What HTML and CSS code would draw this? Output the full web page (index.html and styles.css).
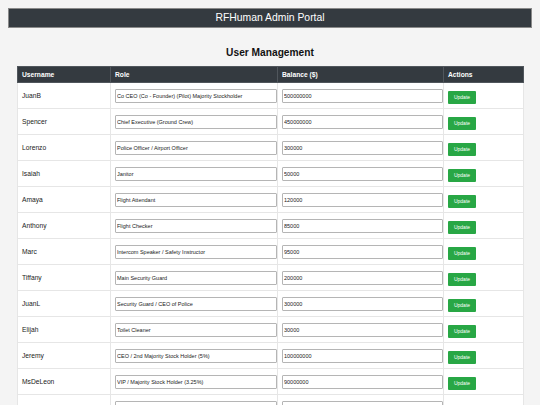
FILE: index.html
```html
<!DOCTYPE html>
<html lang="en">
<head>
    <meta charset="UTF-8">
    <meta name="viewport" content="width=device-width, initial-scale=1.0">
    <title>RFHuman Admin Portal</title>
    <link rel="stylesheet" href="styles.css">
</head>
<body>
    <header class="topbar">RFHuman Admin Portal</header>

    <h2 class="title">User Management</h2>

    <table class="users">
        <thead>
            <tr>
                <th class="col-user">Username</th>
                <th class="col-role">Role</th>
                <th class="col-balance">Balance ($)</th>
                <th class="col-actions">Actions</th>
            </tr>
        </thead>
        <tbody>
            <tr>
                <td>JuanB</td>
                <td><input type="text" value="Co CEO (Co - Founder) (Pilot) Majority Stockholder"></td>
                <td><input type="text" value="500000000"></td>
                <td><button class="update">Update</button></td>
            </tr>
            <tr>
                <td>Spencer</td>
                <td><input type="text" value="Chief Executive (Ground Crew)"></td>
                <td><input type="text" value="450000000"></td>
                <td><button class="update">Update</button></td>
            </tr>
            <tr>
                <td>Lorenzo</td>
                <td><input type="text" value="Police Officer / Airport Officer"></td>
                <td><input type="text" value="300000"></td>
                <td><button class="update">Update</button></td>
            </tr>
            <tr>
                <td>Isaiah</td>
                <td><input type="text" value="Janitor"></td>
                <td><input type="text" value="50000"></td>
                <td><button class="update">Update</button></td>
            </tr>
            <tr>
                <td>Amaya</td>
                <td><input type="text" value="Flight Attendant"></td>
                <td><input type="text" value="120000"></td>
                <td><button class="update">Update</button></td>
            </tr>
            <tr>
                <td>Anthony</td>
                <td><input type="text" value="Flight Checker"></td>
                <td><input type="text" value="85000"></td>
                <td><button class="update">Update</button></td>
            </tr>
            <tr>
                <td>Marc</td>
                <td><input type="text" value="Intercom Speaker / Safety Instructor"></td>
                <td><input type="text" value="95000"></td>
                <td><button class="update">Update</button></td>
            </tr>
            <tr>
                <td>Tiffany</td>
                <td><input type="text" value="Main Security Guard"></td>
                <td><input type="text" value="200000"></td>
                <td><button class="update">Update</button></td>
            </tr>
            <tr>
                <td>JuanL</td>
                <td><input type="text" value="Security Guard / CEO of Police"></td>
                <td><input type="text" value="300000"></td>
                <td><button class="update">Update</button></td>
            </tr>
            <tr>
                <td>Elijah</td>
                <td><input type="text" value="Toilet Cleaner"></td>
                <td><input type="text" value="30000"></td>
                <td><button class="update">Update</button></td>
            </tr>
            <tr>
                <td>Jeremy</td>
                <td><input type="text" value="CEO / 2nd Majority Stock Holder (5%)"></td>
                <td><input type="text" value="100000000"></td>
                <td><button class="update">Update</button></td>
            </tr>
            <tr>
                <td>MsDeLeon</td>
                <td><input type="text" value="VIP / Majority Stock Holder (3.25%)"></td>
                <td><input type="text" value="90000000"></td>
                <td><button class="update">Update</button></td>
            </tr>
            <tr>
                <td></td>
                <td><input type="text" value=""></td>
                <td><input type="text" value=""></td>
                <td></td>
            </tr>
        </tbody>
    </table>
</body>
</html>
```

FILE: styles.css
```css
body {
    margin: 8px;
    background-color: #f4f4f4;
    font-family: "Liberation Sans", Arial, sans-serif;
    color: #222;
}
.topbar {
    height: 20px;
    box-sizing: border-box;
    border: 1px solid #8a8a8a;
    background-color: #343a40;
    color: #fff;
    font-size: 10.4px;
    line-height: 18px;
    text-align: center;
}
.title {
    margin: 19px 0 7px;
    font-size: 10.2px;
    line-height: 12px;
    text-align: center;
    color: #111;
}
.users {
    width: 506px;
    margin: 0 9px;
    border-collapse: collapse;
    background-color: #fff;
    table-layout: fixed;
}
.users th,
.users td {
    border: 1px solid #e6e6e6;
    padding: 0 4px;
    text-align: left;
    font-size: 6.7px;
}
.users th {
    height: 16px;
    box-sizing: border-box;
    background-color: #343a40;
    border-color: #50565c;
    color: #fff;
    font-weight: bold;
}
.users td {
    height: 26px;
    box-sizing: border-box;
    vertical-align: middle;
}
.col-user { width: 93px; }
.col-role { width: 167px; }
.col-balance { width: 166px; }
.col-actions { width: 80px; }
.users input {
    display: block;
    width: 100%;
    height: 12px;
    box-sizing: content-box;
    padding: 0 1px;
    margin: 0;
    border: 1px solid #b5b5b5;
    border-radius: 1px;
    font-family: "Liberation Sans", Arial, sans-serif;
    font-size: 5.5px;
    color: #222;
    background: #fff;
}
.update {
    display: block;
    width: 28px;
    height: 13px;
    margin-top: 3px;
    padding: 0;
    border: none;
    border-radius: 1px;
    background-color: #28a745;
    color: #fff;
    font-family: "Liberation Sans", Arial, sans-serif;
    font-size: 5px;
    cursor: pointer;
}
```
